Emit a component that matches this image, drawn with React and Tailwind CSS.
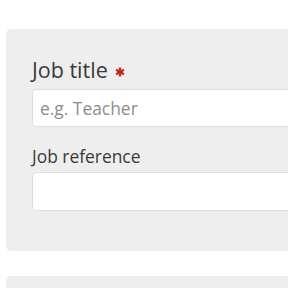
export default function App() {
  return (
    <div
      className="w-[288px] h-[288px] overflow-hidden bg-white pt-[29px]"
      style={{ fontFamily: '"Open Sans", sans-serif' }}
    >
      <div className="ml-[6px] w-[400px] rounded-[5px] bg-[#eeeeee] pl-[26px] pt-[26px] pb-[40px]">
        <label className="flex items-center gap-[7px] text-[21.5px] leading-[30px] text-[#3a3a3a]">
          Job title
          <svg viewBox="0 0 10 10" className="w-[10px] h-[10px] mt-[3px]">
            <g stroke="#c9281c" strokeWidth="2.4" strokeLinecap="butt">
              <line x1="5" y1="0.5" x2="5" y2="9.5" />
              <line x1="1.1" y1="2.75" x2="8.9" y2="7.25" />
              <line x1="1.1" y1="7.25" x2="8.9" y2="2.75" />
            </g>
          </svg>
        </label>
        <input
          type="text"
          placeholder="e.g. Teacher"
          className="mt-[4px] block w-full h-[38px] rounded-[4px] border border-[#dedede] bg-white px-[7px] text-[17.4px] text-[#333] placeholder:text-[#8c8c8c] outline-none"
        />
        <label className="mt-[17px] block text-[17.4px] leading-[24px] text-[#3a3a3a]">
          Job reference
        </label>
        <input
          type="text"
          className="mt-[4px] block w-full h-[39px] rounded-[4px] border border-[#dedede] bg-white px-[7px] text-[17px] text-[#333] outline-none"
        />
      </div>
      <div className="ml-[6px] mt-[25px] w-[400px] h-[60px] rounded-[5px] bg-[#eeeeee]" />
    </div>
  );
}
